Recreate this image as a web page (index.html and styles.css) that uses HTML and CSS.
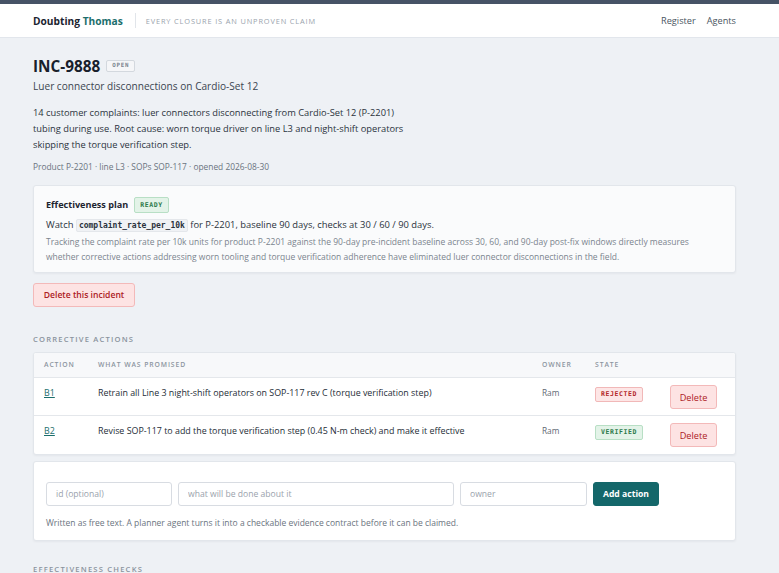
FILE: index.html
```html
<!DOCTYPE html>
<html lang="en">
<head>
<meta charset="utf-8">
<title>INC-9888 · Doubting Thomas</title>
<link rel="stylesheet" href="styles.css">
</head>
<body>
<div class="topbar"></div>
<header class="site-header">
  <div class="wrap header-row">
    <div class="brand">
      <span class="brand-name">Doubting <span class="brand-accent">Thomas</span></span>
      <span class="brand-sep"></span>
      <span class="tagline">Every closure is an unproven claim</span>
    </div>
    <nav class="nav">
      <a href="#">Register</a>
      <a href="#">Agents</a>
    </nav>
  </div>
</header>

<main class="wrap page">
  <div class="title-row">
    <h1>INC-9888</h1>
    <span class="badge badge-neutral">OPEN</span>
  </div>
  <p class="subtitle">Luer connector disconnections on Cardio-Set 12</p>
  <p class="description">14 customer complaints: luer connectors disconnecting from Cardio-Set 12 (P-2201) tubing during use. Root cause: worn torque driver on line L3 and night-shift operators skipping the torque verification step.</p>
  <p class="meta">Product P-2201 · line L3 · SOPs SOP-117 · opened 2026-08-30</p>

  <section class="card plan">
    <div class="plan-head">
      <h2>Effectiveness plan</h2>
      <span class="badge badge-green">READY</span>
    </div>
    <p class="plan-line">Watch <code>complaint_rate_per_10k</code> for P-2201, baseline 90 days, checks at 30 / 60 / 90 days.</p>
    <p class="plan-note">Tracking the complaint rate per 10k units for product P-2201 against the 90-day pre-incident baseline across 30, 60, and 90-day post-fix windows directly measures whether corrective actions addressing worn tooling and torque verification adherence have eliminated luer connector disconnections in the field.</p>
  </section>

  <button class="btn btn-danger btn-incident">Delete this incident</button>

  <h3 class="section-label">Corrective actions</h3>
  <div class="card table-card">
    <table class="actions">
      <colgroup>
        <col class="c-id"><col class="c-what"><col class="c-owner"><col class="c-state"><col class="c-del">
      </colgroup>
      <thead>
        <tr><th>Action</th><th>What was promised</th><th>Owner</th><th>State</th><th></th></tr>
      </thead>
      <tbody>
        <tr>
          <td><a href="#">B1</a></td>
          <td>Retrain all Line 3 night-shift operators on SOP-117 rev C (torque verification step)</td>
          <td class="owner">Ram</td>
          <td><span class="badge badge-red">REJECTED</span></td>
          <td><button class="btn btn-danger btn-row">Delete</button></td>
        </tr>
        <tr>
          <td><a href="#">B2</a></td>
          <td>Revise SOP-117 to add the torque verification step (0.45 N-m check) and make it effective</td>
          <td class="owner">Ram</td>
          <td><span class="badge badge-green">VERIFIED</span></td>
          <td><button class="btn btn-danger btn-row">Delete</button></td>
        </tr>
      </tbody>
    </table>
  </div>

  <form class="card add-form">
    <div class="form-row">
      <input class="in-id" type="text" placeholder="id (optional)">
      <input class="in-what" type="text" placeholder="what will be done about it">
      <input class="in-owner" type="text" placeholder="owner">
      <button type="button" class="btn btn-primary">Add action</button>
    </div>
    <p class="hint">Written as free text. A planner agent turns it into a checkable evidence contract before it can be claimed.</p>
  </form>

  <h3 class="section-label section-label-next">Effectiveness checks</h3>
</main>
</body>
</html>
```
FILE: styles.css
```css
* { box-sizing: border-box; }

html, body {
  margin: 0;
  padding: 0;
}

body {
  background: #eef1f5;
  color: #1f2933;
  font-family: "Open Sans", "Noto Sans", sans-serif;
  font-size: 10px;
  overflow: hidden;
}

.wrap {
  width: 703px;
  margin-left: 33px;
}

.topbar {
  height: 4px;
  background: #465366;
}

.site-header {
  background: #fff;
  border-bottom: 1px solid #e2e6ec;
}

.header-row {
  height: 33px;
  display: flex;
  align-items: center;
  justify-content: space-between;
}

.brand {
  display: flex;
  align-items: center;
}

.brand-name {
  font-weight: 700;
  font-size: 10.2px;
  color: #1b2430;
}

.brand-accent { color: #1b6e6c; }

.brand-sep {
  width: 1px;
  height: 15px;
  background: #e1e5ea;
  margin: 0 10px 0 12px;
}

.tagline {
  text-transform: uppercase;
  font-size: 7.4px;
  letter-spacing: 0.85px;
  color: #9aa3ad;
}

.nav {
  display: flex;
  gap: 11px;
}

.nav a {
  color: #4a5561;
  text-decoration: none;
  font-size: 9.2px;
}

.page {
  padding-top: 17px;
}

.title-row {
  display: flex;
  align-items: center;
  gap: 6px;
}

h1 {
  margin: 0;
  font-size: 15.3px;
  font-weight: 700;
  color: #18202b;
  line-height: 22px;
}

.badge {
  display: inline-block;
  font-family: "DejaVu Sans Mono", monospace;
  font-weight: 700;
  letter-spacing: 0.6px;
  border: 1px solid;
  border-radius: 2px;
  line-height: 1;
}

.badge-neutral {
  font-size: 5.8px;
  padding: 2px 5px;
  letter-spacing: 0.8px;
  color: #7a848f;
  background: #f5f6f8;
  border-color: #d3d8de;
}

.badge-green,
.badge-red {
  font-size: 6.5px;
  padding: 3.5px 5px 3.5px 5px;
}

.badge-green {
  color: #2d7a4b;
  background: #e3f3e8;
  border-color: #b8dfc5;
}

.badge-red {
  color: #b4282a;
  background: #fde6e6;
  border-color: #f1b8b8;
}

.subtitle {
  margin: 1px 0 0;
  font-size: 10.1px;
  color: #3b4550;
  line-height: 16px;
}

.description {
  margin: 11px 0 0;
  width: 380px;
  font-size: 9.3px;
  line-height: 16px;
  color: #2b333d;
}

.meta {
  margin: 8px 0 0;
  font-size: 8.4px;
  color: #6b7480;
  line-height: 12px;
}

.card {
  background: #fff;
  border: 1px solid #e2e6eb;
  border-radius: 3px;
  box-shadow: 0 1px 2px rgba(30, 40, 55, 0.05);
}

.plan {
  margin-top: 12px;
  background: #fafbfc;
  padding: 11px 12px 8px;
}

.plan-head {
  display: flex;
  align-items: center;
  gap: 6px;
}

h2 {
  margin: 0;
  font-size: 9.1px;
  font-weight: 700;
  color: #1d2530;
}

.plan-line {
  margin: 4px 0 0;
  font-size: 9.4px;
  line-height: 16px;
  color: #2b333d;
}

code {
  font-family: "DejaVu Sans Mono", monospace;
  font-weight: 700;
  font-size: 8px;
  background: #f0f2f5;
  border: 1px solid #e4e7eb;
  border-radius: 2px;
  padding: 1px 2px;
  color: #2b333d;
}

.plan-note {
  margin: 0;
  font-size: 8.5px;
  line-height: 15px;
  color: #7b848e;
}

.btn {
  font-family: inherit;
  border: 1px solid;
  border-radius: 3px;
  cursor: pointer;
}

.btn-danger {
  background: #fde3e3;
  border-color: #f3b9b9;
  color: #ad2023;
}

.btn-incident {
  display: block;
  margin-top: 10px;
  height: 24px;
  width: 102px;
  font-size: 8.6px;
  font-weight: 600;
  padding: 0;
}

.section-label {
  margin: 27px 0 8px;
  font-size: 7.6px;
  line-height: 10px;
  font-weight: 600;
  letter-spacing: 1.2px;
  text-transform: uppercase;
  color: #8a939d;
}

.section-label-next {
  margin-top: 23px;
}

.table-card {
  overflow: hidden;
}

.actions {
  width: 100%;
  border-collapse: collapse;
  table-layout: fixed;
}

.c-id { width: 54px; }
.c-what { width: 444px; }
.c-owner { width: 53px; }
.c-state { width: 75px; }

.actions th {
  background: #f7f8fa;
  text-align: left;
  font-size: 6.8px;
  font-weight: 600;
  letter-spacing: 0.9px;
  text-transform: uppercase;
  color: #8c959f;
  height: 25px;
  padding: 0 0 0 10px;
  border-bottom: 1px solid #e4e7eb;
}

.actions td {
  vertical-align: top;
  padding: 7px 0 6px 10px;
  font-size: 8.9px;
  line-height: 15px;
  color: #252d37;
  border-bottom: 1px solid #e4e7eb;
}

.actions tbody tr:last-child td {
  border-bottom: 0;
  padding-bottom: 7px;
}

.actions td a {
  color: #1b6e6c;
  text-decoration: underline;
}

.actions td.owner {
  color: #5f6873;
  font-size: 8.3px;
}

.btn-row {
  width: 47px;
  height: 24px;
  padding: 0;
  font-size: 9.2px;
}

.add-form {
  margin-top: 6px;
  padding: 20px 12px 11px;
}

.form-row {
  display: flex;
  gap: 6px;
}

.form-row input {
  height: 24px;
  border: 1px solid #d8dce2;
  border-radius: 3px;
  padding: 0 9px;
  font-family: inherit;
  font-size: 8.6px;
  color: #2b333d;
  background: #fff;
}

.form-row input::placeholder { color: #9aa2ac; }

.in-id { width: 126px; }
.in-what { width: 276px; }
.in-owner { width: 127px; }

.btn-primary {
  height: 24px;
  width: 66px;
  padding: 0;
  background: #14676a;
  border-color: #14676a;
  color: #fff;
  font-weight: 700;
  font-size: 8.6px;
}

.hint {
  margin: 11px 0 0;
  font-size: 8.5px;
  line-height: 12px;
  color: #6b7480;
}
```
